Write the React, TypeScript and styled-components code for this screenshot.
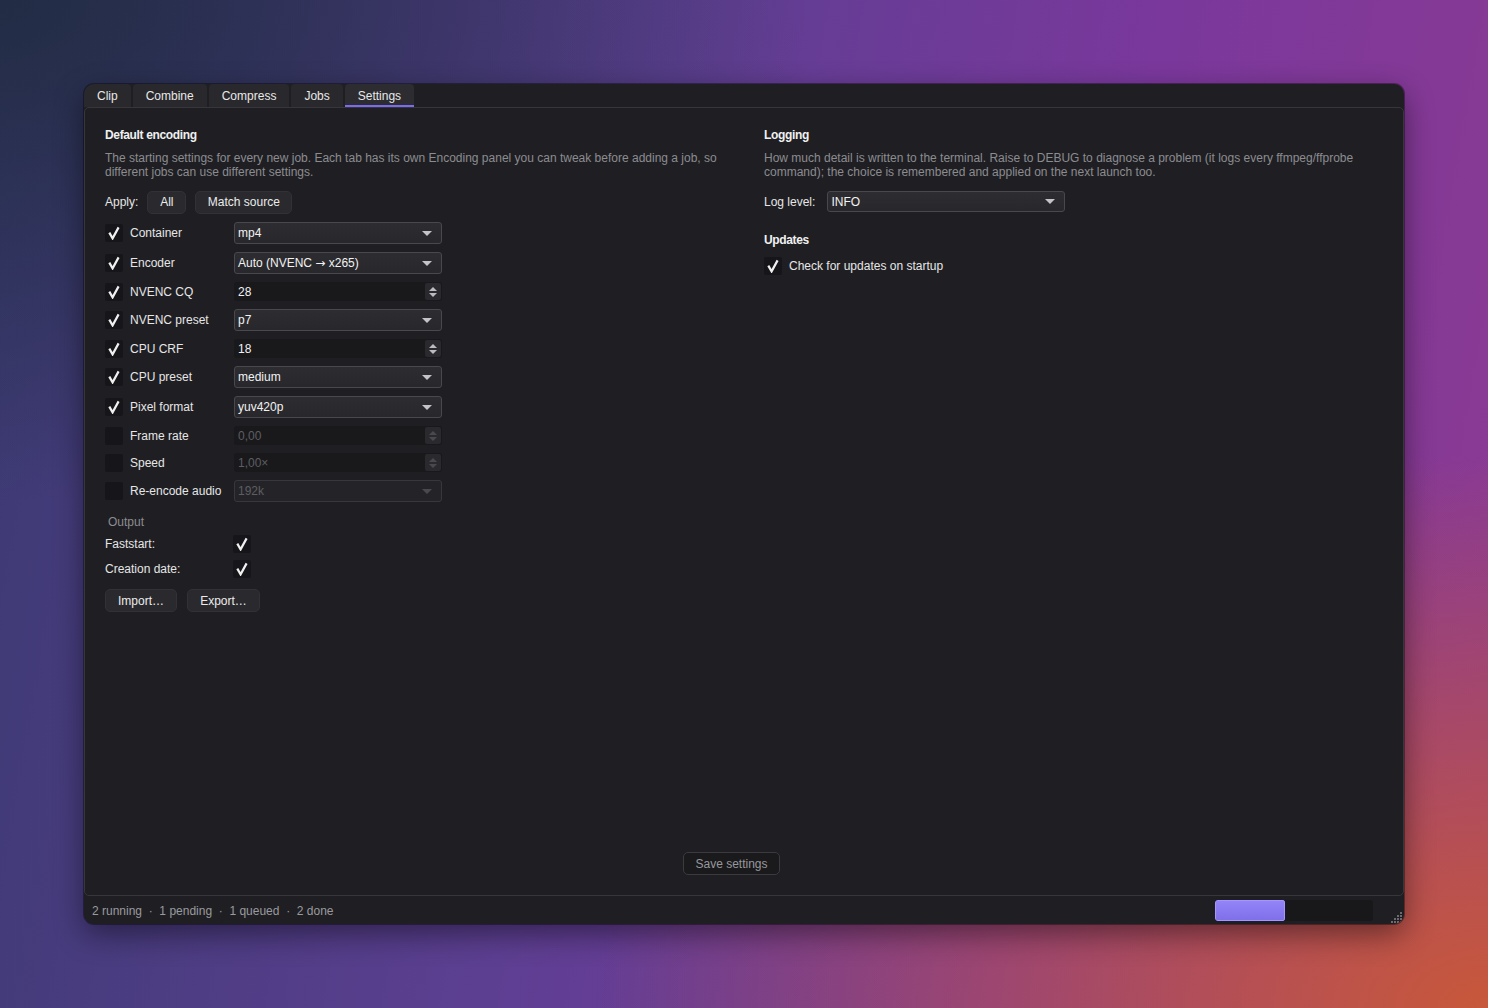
import React from "react";
import styled, { createGlobalStyle } from "styled-components";

const Global = createGlobalStyle`
  html, body { margin: 0; padding: 0; }
  body {
    width: 1488px; height: 1008px; overflow: hidden;
    font-family: "Liberation Sans", Arial, sans-serif;
    font-size: 12px;
    background:
      radial-gradient(ellipse 60% 55% at 100% 100%, #c8583a 0%, rgba(200,88,58,0) 100%),
      radial-gradient(ellipse 55% 50% at 0% 0%, #222c44 0%, rgba(34,44,68,0) 100%),
      linear-gradient(100deg, #3b3a72 0%, #5d3f92 40%, #7a389c 70%, #8c3a92 100%);
  }
`;

const Window = styled.div`
  margin: 84px 0 0 84px;
  width: 1320px;
  height: 840px;
  background: #1f1f23;
  border-radius: 10px;
  overflow: hidden;
  display: flex;
  flex-direction: column;
  box-shadow: 0 10px 30px rgba(0,0,0,0.45), 0 0 0 1px rgba(0,0,0,0.35);
  color: #e6e6e6;
`;

const TabBar = styled.div`
  height: 23px;
  display: flex;
  align-items: flex-end;
  gap: 2px;
  flex: none;
`;

const Tab = styled.div<{ $active?: boolean }>`
  height: 23px;
  box-sizing: border-box;
  padding: 2px 13px 0;
  display: flex;
  align-items: center;
  background: ${p => (p.$active ? "#2c2c31" : "#29292d")};
  border-radius: 4px 4px 0 0;
  color: #e8e8e8;
  font-size: 12px;
  border-bottom: 2px solid ${p => (p.$active ? "#7a6cf0" : "transparent")};
`;

const Panel = styled.div`
  flex: 1;
  border: 1px solid #36363b;
  border-radius: 5px;
  display: flex;
  flex-direction: column;
  padding: 20px;
  min-height: 0;
`;

const Columns = styled.div`
  display: grid;
  grid-template-columns: 619px 619px;
  column-gap: 40px;
  flex: 1;
  align-items: start;
`;

const Col = styled.div`
  display: flex;
  flex-direction: column;
`;

const Heading = styled.div<{ $mt?: number }>`
  font-weight: bold;
  font-size: 12px;
  line-height: 14px;
  letter-spacing: -0.35px;
  color: #f0f0f0;
  margin-top: ${p => p.$mt ?? 0}px;
`;

const Desc = styled.div`
  color: #8c8c90;
  line-height: 14px;
  margin-top: 9px;
`;

const ApplyRow = styled.div`
  display: flex;
  align-items: center;
  gap: 9px;
  margin-top: 11px;
  height: 24px;
`;

const Btn = styled.div<{ $w?: number }>`
  height: 23px;
  box-sizing: border-box;
  padding: 0 10px;
  display: flex;
  align-items: center;
  justify-content: center;
  white-space: nowrap;
  background: #2a2a2e;
  border: 1px solid #323236;
  border-radius: 5px;
  color: #ececec;
  flex: none;
  ${p => (p.$w ? `width: ${p.$w}px;` : "")}
`;

const Rows = styled.div`
  display: flex;
  flex-direction: column;
  gap: 8px;
  margin-top: 8px;
`;

const Row = styled.div`
  display: flex;
  align-items: center;
`;

const Label = styled.div<{ $w?: number }>`
  width: ${p => p.$w ?? 104}px;
  color: #e6e6e6;
  flex: none;
`;

const Box = styled.div`
  width: 18px;
  height: 18px;
  background: #16161a;
  border-radius: 2px;
  display: flex;
  align-items: center;
  justify-content: center;
  flex: none;
`;

const CheckGap = styled.div`
  width: 7px;
  flex: none;
`;

const Combo = styled.div<{ $w?: number; $h?: number; $disabled?: boolean }>`
  width: ${p => p.$w ?? 208}px;
  height: ${p => p.$h ?? 22}px;
  box-sizing: border-box;
  border: 1px solid ${p => (p.$disabled ? "#38383c" : "#48484d")};
  border-radius: 3px;
  background: ${p => (p.$disabled ? "#242428" : "linear-gradient(#2d2d31, #28282c)")};
  color: ${p => (p.$disabled ? "#5e5e62" : "#f2f2f2")};
  display: flex;
  align-items: center;
  justify-content: space-between;
  padding: 0 9px 0 3px;
  flex: none;
  white-space: pre;
`;

const ArrowGlyph = styled.span`
  font-family: "DejaVu Sans", sans-serif;
  font-size: 12px;
`;

const Arrow = styled.div<{ $disabled?: boolean }>`
  width: 0;
  height: 0;
  border-left: 5px solid transparent;
  border-right: 5px solid transparent;
  border-top: 5px solid ${p => (p.$disabled ? "#4a4a4e" : "#c4c4c8")};
`;

const Spin = styled.div<{ $disabled?: boolean }>`
  width: 208px;
  height: 19px;
  box-sizing: border-box;
  background: #19191c;
  border-radius: 3px;
  display: flex;
  align-items: center;
  color: ${p => (p.$disabled ? "#5e5e62" : "#f2f2f2")};
  padding-left: 4px;
  overflow: hidden;
  flex: none;
`;

const SpinText = styled.div`
  flex: 1;
`;

const SpinBtns = styled.div<{ $disabled?: boolean }>`
  width: 16px;
  height: 17px;
  margin-right: 1px;
  background: #2a2a2e;
  border-radius: 2px;
  display: flex;
  flex-direction: column;
  align-items: center;
  justify-content: center;
  gap: 2px;
  & > span { display: block; width: 0; height: 0; border-left: 4px solid transparent; border-right: 4px solid transparent; }
  & > span:first-child { border-bottom: 4px solid ${p => (p.$disabled ? "#4a4a4e" : "#bcbcc0")}; }
  & > span:last-child { border-top: 4px solid ${p => (p.$disabled ? "#4a4a4e" : "#bcbcc0")}; }
`;

const OutputLabel = styled.div`
  color: #8c8c90;
  line-height: 14px;
  margin: 13px 0 0 3px;
`;

const OutRows = styled.div`
  display: flex;
  flex-direction: column;
  gap: 7px;
  margin-top: 6px;
`;

const BtnRow = styled.div`
  display: flex;
  gap: 10px;
  margin-top: 11px;
`;

const LogRow = styled.div`
  display: flex;
  align-items: center;
  gap: 12px;
  margin-top: 12px;
`;

const UpdRow = styled.div`
  display: flex;
  align-items: center;
  gap: 7px;
  margin-top: 10px;
`;

const SaveRow = styled.div`
  display: flex;
  justify-content: center;
  padding-right: 25px;
`;

const SaveBtn = styled.div`
  height: 23px;
  width: 97px;
  box-sizing: border-box;
  border: 1px solid #3a3a3f;
  border-radius: 5px;
  background: #1a1a1d;
  color: #98989c;
  display: flex;
  align-items: center;
  justify-content: center;
`;

const StatusBar = styled.div`
  height: 28px;
  flex: none;
  display: flex;
  align-items: center;
  padding: 0 10px 0 8px;
  color: #9a9a9e;
  position: relative;
`;

const StatusText = styled.div`
  flex: 1;
  white-space: pre;
  padding-top: 1px;
`;

const Progress = styled.div`
  width: 158px;
  height: 21px;
  background: #18181b;
  border-radius: 3px;
  margin-right: 21px;
  overflow: hidden;
  display: flex;
`;

const Fill = styled.div`
  height: 100%;
  box-sizing: border-box;
  background: linear-gradient(#9384f8, #7f70ea);
  border: 1px solid #a496ff;
  border-radius: 2px;
`;

const Grip = styled.svg`
  position: absolute;
  right: 1px;
  bottom: 1px;
`;

const Check = () => (
  <svg width="14" height="14" viewBox="0 0 14 14">
    <path d="M2.3 6.6 L5.6 12.4 L11.6 1.4" fill="none" stroke="#f0f0f0" strokeWidth="2.2" strokeLinejoin="miter" />
  </svg>
);

type R = { label: string; on: boolean; kind: "combo" | "spin"; value: React.ReactNode };
const rows: R[] = [
  { label: "Container", on: true, kind: "combo", value: "mp4" },
  { label: "Encoder", on: true, kind: "combo", value: <>{"Auto (NVENC "}<ArrowGlyph>{"\u2192"}</ArrowGlyph>{" x265)"}</> },
  { label: "NVENC CQ", on: true, kind: "spin", value: "28" },
  { label: "NVENC preset", on: true, kind: "combo", value: "p7" },
  { label: "CPU CRF", on: true, kind: "spin", value: "18" },
  { label: "CPU preset", on: true, kind: "combo", value: "medium" },
  { label: "Pixel format", on: true, kind: "combo", value: "yuv420p" },
  { label: "Frame rate", on: false, kind: "spin", value: "0,00" },
  { label: "Speed", on: false, kind: "spin", value: "1,00\u00d7" },
  { label: "Re-encode audio", on: false, kind: "combo", value: "192k" },
];

export default function App() {
  return (
    <>
      <Global />
      <Window>
        <TabBar>
          <Tab>Clip</Tab>
          <Tab>Combine</Tab>
          <Tab>Compress</Tab>
          <Tab>Jobs</Tab>
          <Tab $active>Settings</Tab>
        </TabBar>
        <Panel>
          <Columns>
            <Col>
              <Heading>Default encoding</Heading>
              <Desc>
                The starting settings for every new job. Each tab has its own Encoding panel you can tweak before adding a job, so
                <br />
                different jobs can use different settings.
              </Desc>
              <ApplyRow>
                <span>Apply:</span>
                <Btn $w={39}>All</Btn>
                <Btn $w={97}>Match source</Btn>
              </ApplyRow>
              <Rows>
                {rows.map(r => (
                  <Row key={r.label}>
                    <Box>{r.on && <Check />}</Box>
                    <CheckGap />
                    <Label>{r.label}</Label>
                    {r.kind === "combo" ? (
                      <Combo $disabled={!r.on}>
                        <span>{r.value}</span>
                        <Arrow $disabled={!r.on} />
                      </Combo>
                    ) : (
                      <Spin $disabled={!r.on}>
                        <SpinText>{r.value}</SpinText>
                        <SpinBtns $disabled={!r.on}>
                          <span />
                          <span />
                        </SpinBtns>
                      </Spin>
                    )}
                  </Row>
                ))}
              </Rows>
              <OutputLabel>Output</OutputLabel>
              <OutRows>
                <Row>
                  <Label $w={128}>Faststart:</Label>
                  <Box><Check /></Box>
                </Row>
                <Row>
                  <Label $w={128}>Creation date:</Label>
                  <Box><Check /></Box>
                </Row>
              </OutRows>
              <BtnRow>
                <Btn $w={72}>Import…</Btn>
                <Btn $w={73}>Export…</Btn>
              </BtnRow>
            </Col>
            <Col>
              <Heading>Logging</Heading>
              <Desc>
                How much detail is written to the terminal. Raise to DEBUG to diagnose a problem (it logs every ffmpeg/ffprobe
                <br />
                command); the choice is remembered and applied on the next launch too.
              </Desc>
              <LogRow>
                <span>Log level:</span>
                <Combo $w={238} $h={21}>
                  <span>INFO</span>
                  <Arrow />
                </Combo>
              </LogRow>
              <Heading $mt={21}>Updates</Heading>
              <UpdRow>
                <Box><Check /></Box>
                <span>Check for updates on startup</span>
              </UpdRow>
            </Col>
          </Columns>
          <SaveRow>
            <SaveBtn>Save settings</SaveBtn>
          </SaveRow>
        </Panel>
        <StatusBar>
          <StatusText>{"2 running  \u00b7  1 pending  \u00b7  1 queued  \u00b7  2 done"}</StatusText>
          <Progress>
            <Fill style={{ width: `${(70 / 158) * 100}%` }} />
          </Progress>
          <Grip width="12" height="12" viewBox="0 0 12 12">
            {[[9, 1], [6, 4], [9, 4], [3, 7], [6, 7], [9, 7], [0, 10], [3, 10], [6, 10], [9, 10]].map(([x, y], i) => (
              <rect key={i} x={x} y={y} width="2" height="2" fill="#6a6a70" />
            ))}
          </Grip>
        </StatusBar>
      </Window>
    </>
  );
}
